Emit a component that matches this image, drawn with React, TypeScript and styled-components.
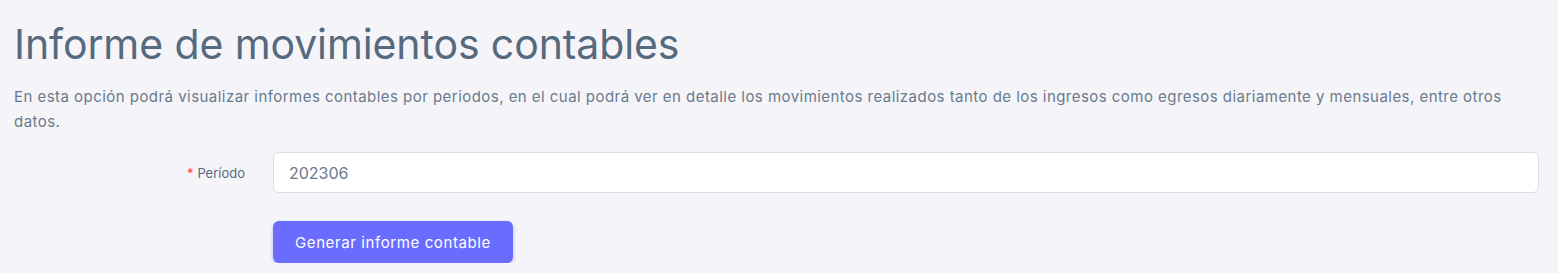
import styled, { createGlobalStyle } from 'styled-components';

const GlobalStyle = createGlobalStyle`
  html, body {
    margin: 0;
    padding: 0;
    background: #f5f5f9;
  }
  body {
    font-family: "Inter", "Noto Sans", "Liberation Sans", sans-serif;
    color: #697a8d;
  }
`;

const Page = styled.div`
  padding: 20px 14px 0 14px;
`;

const Title = styled.h1`
  margin: 0;
  font-size: 41px;
  font-weight: 400;
  line-height: 1.2;
  color: #566a7f;
  letter-spacing: -0.1px;
`;

const Description = styled.p`
  margin: 15px 0 0 0;
  font-size: 15px;
  line-height: 25px;
  letter-spacing: 0.46px;
  color: #697a8d;
`;

const Form = styled.form`
  margin-top: 18px;
  display: grid;
  grid-template-columns: 231px 1fr;
  column-gap: 28px;
  row-gap: 28px;
  align-items: center;
  padding-right: 5px;
`;

const Label = styled.label`
  text-align: right;
  font-size: 13px;
  color: #566a7f;
`;

const Required = styled.span`
  color: #ff3e1d;
  margin-right: 4px;
`;

const Input = styled.input`
  box-sizing: border-box;
  width: 100%;
  height: 41px;
  padding: 0 15px;
  border: 1px solid #d9dee3;
  border-radius: 6px;
  background: #fff;
  font-family: inherit;
  font-size: 16px;
  color: #697a8d;
  outline: none;
`;

const Button = styled.button`
  grid-column: 2;
  justify-self: start;
  height: 42px;
  padding: 0 22px;
  border: none;
  border-radius: 6px;
  background: #696cff;
  color: #fff;
  font-family: inherit;
  font-size: 15px;
  letter-spacing: 0.6px;
  box-shadow: 0 2px 4px 0 rgba(105, 108, 255, 0.4);
  cursor: pointer;
`;

export default function App() {
  return (
    <Page>
      <GlobalStyle />
      <Title>Informe de movimientos contables</Title>
      <Description>
        En esta opción podrá visualizar informes contables por periodos, en el cual podrá ver en detalle los movimientos realizados tanto de los ingresos como egresos diariamente y mensuales, entre otros datos.
      </Description>
      <Form onSubmit={e => e.preventDefault()}>
        <Label htmlFor="periodo"><Required>*</Required>Período</Label>
        <Input id="periodo" defaultValue="202306" />
        <Button type="submit">Generar informe contable</Button>
      </Form>
    </Page>
  );
}
